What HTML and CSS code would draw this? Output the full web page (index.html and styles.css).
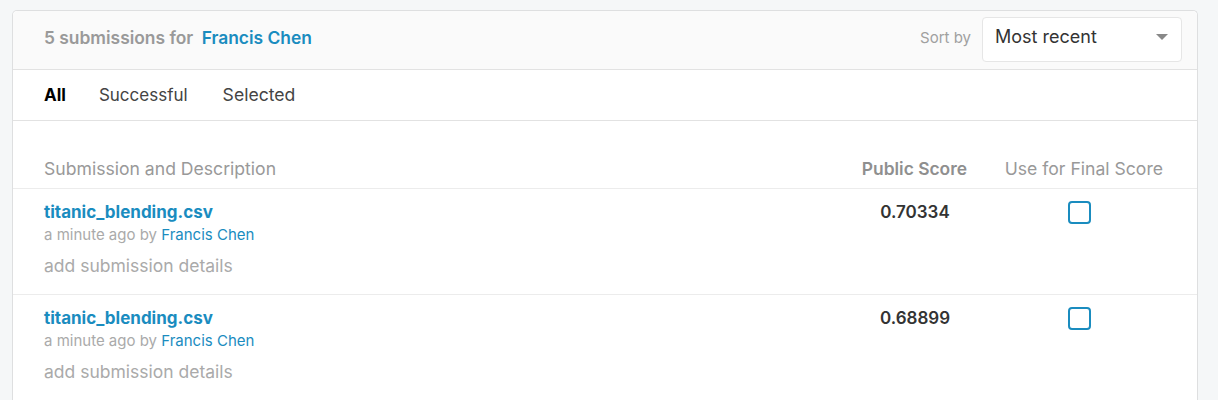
FILE: index.html
```html
<!DOCTYPE html>
<html>
<head>
<meta charset="utf-8">
<link rel="stylesheet" href="styles.css">
</head>
<body>
<div class="card">
  <div class="card-header">
    <div class="title"><span class="count">5 submissions for</span> <a class="user">Francis Chen</a></div>
    <div class="sort">
      <span class="sort-label">Sort by</span>
      <div class="select"><span>Most recent</span><span class="caret"></span></div>
    </div>
  </div>
  <div class="tabs">
    <span class="tab active">All</span>
    <span class="tab">Successful</span>
    <span class="tab">Selected</span>
  </div>
  <div class="table">
    <div class="row head">
      <div class="c1">Submission and Description</div>
      <div class="c2">Public Score</div>
      <div class="c3">Use for Final Score</div>
    </div>
    <div class="row item">
      <div class="c1">
        <a class="file">titanic_blending.csv</a>
        <div class="meta">a minute ago by <a class="by">Francis Chen</a></div>
        <div class="details">add submission details</div>
      </div>
      <div class="c2 score">0.70334</div>
      <div class="c3"><span class="check"></span></div>
    </div>
    <div class="row item">
      <div class="c1">
        <a class="file">titanic_blending.csv</a>
        <div class="meta">a minute ago by <a class="by">Francis Chen</a></div>
        <div class="details">add submission details</div>
      </div>
      <div class="c2 score">0.68899</div>
      <div class="c3"><span class="check"></span></div>
    </div>
  </div>
</div>
</body>
</html>
```

FILE: styles.css
```css
* { box-sizing: border-box; }
body {
  margin: 0;
  background: #f5f7f8;
  font-family: "Inter", "Liberation Sans", sans-serif;
  color: #333;
  padding: 10px 20px 0 12px;
}
a { text-decoration: none; color: #1a8cbf; }
.card {
  background: #fff;
  border: 1px solid #dedfe0;
  border-radius: 5px;
  border-bottom: none;
  border-bottom-left-radius: 0;
  border-bottom-right-radius: 0;
  height: 400px;
}
.card-header {
  background: #fafafa;
  border-radius: 5px 5px 0 0;
  height: 59px;
  border-bottom: 1px solid #e2e2e2;
  display: flex;
  align-items: center;
  justify-content: space-between;
  padding: 0 15px 6px 31px;
}
.title { font-size: 17.4px; font-weight: 600; }
.count { color: #999; }
.user { color: #1a8cbf; margin-left: 4px; }
.sort { display: flex; align-items: center; gap: 11px; }
.sort-label { color: #a0a0a0; font-size: 15px; }
.select {
  width: 200px;
  height: 45px;
  background: #fff;
  border: 1px solid #e6e6e6;
  border-radius: 4px;
  display: flex;
  align-items: center;
  justify-content: space-between;
  padding: 0 13px 5px 12px;
  font-size: 18px;
  color: #333;
  margin-top: 4px;
}
.caret {
  width: 0; height: 0;
  border-left: 6px solid transparent;
  border-right: 6px solid transparent;
  border-top: 6px solid #888;
}
.tabs {
  height: 51px;
  border-bottom: 1px solid #e2e2e2;
  display: flex;
  align-items: center;
  gap: 33px;
  padding-left: 31px;
  padding-bottom: 1px;
  font-size: 17px;
  color: #444;
}
.tab:nth-child(3) { margin-left: 2px; font-size: 17.6px; }
.tab.active { color: #000; font-weight: 700; }
.table { padding: 27px 0 0 0; }
.row {
  display: grid;
  grid-template-columns: 1fr 130px 200px;
  padding: 0 30px 0 31px;
}
.row.head {
  font-size: 17.6px;
  color: #999;
  height: 41px;
  align-items: center;
  border-bottom: 1px solid #ececec;
}
.head .c2 { font-weight: 600; color: #8f8f8f; text-align: right; padding-right: 0; font-size: 17.4px; }
.head .c3 { text-align: right; padding-left: 0; justify-content: flex-end; padding-right: 4px; }
.item {
  border-bottom: 1px solid #ececec;
  padding-top: 12px;
  height: 106px;
}
.file { font-size: 17px; font-weight: 700; color: #1a8cbf; display: block; line-height: 22px; }
.meta { font-size: 15px; color: #aaa; line-height: 22px; margin-top: 1px; }
.meta .by { color: #1a8cbf; }
.details { font-size: 17.5px; color: #aaa; margin-top: 9px; line-height: 22px; }
.score { text-align: center; font-size: 17px; font-weight: 600; color: #333; line-height: 22px; padding-left: 26px; }
.c3 { display: flex; justify-content: center; padding-left: 24px; }
.item .c3 { align-items: flex-start; padding-top: 0; }
.check {
  width: 23px; height: 23px;
  border: 2px solid #1a8cbf;
  border-radius: 4px;
  display: block;
}
```
